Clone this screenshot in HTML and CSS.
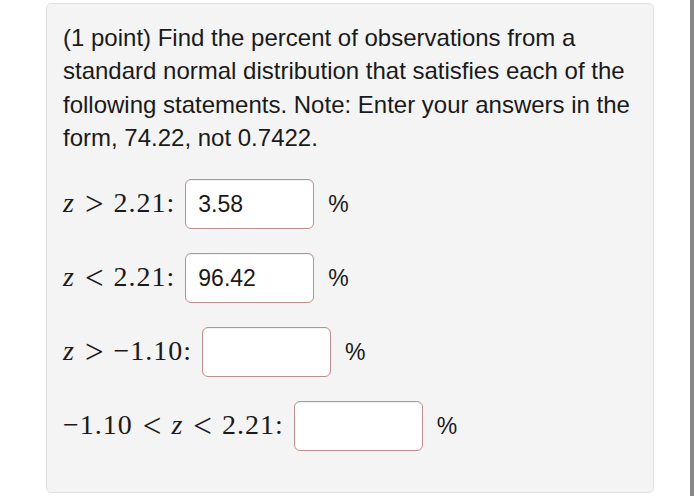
FILE: index.html
```html
<!DOCTYPE html>
<html>
<head>
<meta charset="utf-8">
<link rel="stylesheet" href="styles.css">
</head>
<body>
<div class="page">
  <div class="problem">
    <p class="prompt">(1 point) Find the percent of observations from a<br>standard normal distribution that satisfies each of the<br>following statements. Note: Enter your answers in the<br>form, 74.22, not 0.7422.</p>
    <div class="rows">
      <div class="row">
        <span class="math"><i>z</i><span class="rel">&gt;</span>2.21:</span>
        <span class="answer">3.58</span>
        <span class="pct">%</span>
      </div>
      <div class="row">
        <span class="math"><i>z</i><span class="rel">&lt;</span>2.21:</span>
        <span class="answer">96.42</span>
        <span class="pct">%</span>
      </div>
      <div class="row">
        <span class="math"><i>z</i><span class="rel">&gt;</span>−1.10:</span>
        <span class="answer"></span>
        <span class="pct">%</span>
      </div>
      <div class="row">
        <span class="math">−1.10<span class="rel">&lt;</span><i>z</i><span class="rel">&lt;</span>2.21:</span>
        <span class="answer"></span>
        <span class="pct">%</span>
      </div>
    </div>
  </div>
  <div class="edge"></div>
</div>
</body>
</html>
```

FILE: styles.css
```css
html, body {
  margin: 0;
  padding: 0;
  background: #ffffff;
}

.page {
  display: flex;
  align-items: flex-start;
  height: 498px;
}

.problem {
  box-sizing: border-box;
  margin: 3px 0 0 46px;
  width: 608px;
  height: 490px;
  background: #f4f4f4;
  border: 1px solid #e2e2e2;
  border-radius: 5px;
  padding: 17px 0 0 16px;
}

.prompt {
  margin: 0;
  font-family: "Liberation Sans", Arial, sans-serif;
  font-size: 24px;
  line-height: 33.3px;
  color: #1a1a1a;
  white-space: nowrap;
}

.rows {
  display: flex;
  flex-direction: column;
  gap: 24px;
  margin-top: 25px;
}

.row {
  display: flex;
  align-items: center;
  height: 50px;
}

.math {
  font-family: "Liberation Serif", "Times New Roman", serif;
  font-size: 28px;
  line-height: 1;
  letter-spacing: 1px;
  color: #1a1a1a;
  margin-right: 10px;
}

.math i {
  font-style: italic;
}

.rel {
  font-size: 33px;
  letter-spacing: 0;
  margin: 0 10px;
  vertical-align: -3px;
}

.answer {
  box-sizing: border-box;
  width: 129px;
  height: 50px;
  background: #ffffff;
  border: 1.5px solid #bf8e8e;
  border-radius: 6px;
  box-shadow: inset 0 1px 1px rgba(0, 0, 0, 0.06);
  padding-left: 12px;
  display: flex;
  align-items: center;
  font-family: "Liberation Sans", Arial, sans-serif;
  font-size: 23px;
  color: #1a1a1a;
}

.pct {
  margin-left: 14px;
  font-family: "Liberation Sans", Arial, sans-serif;
  font-size: 23px;
  color: #1a1a1a;
}

.edge {
  margin-left: 36px;
  width: 4px;
  height: 496px;
  background: #888888;
}
```
